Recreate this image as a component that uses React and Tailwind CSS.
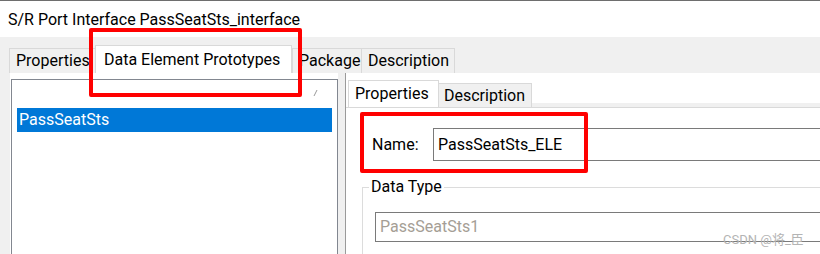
import React from "react"

const font = { fontFamily: "Roboto, 'Noto Sans CJK SC', sans-serif" }

function OuterTab({ label, active, width }) {
  return (
    <div
      className={
        active
          ? "shrink-0 h-[28px] bg-white border border-b-0 border-[#d9d9d9] pl-[8px] pt-[3px] text-[16px] leading-[22px] text-black whitespace-nowrap"
          : "shrink-0 h-[25px] bg-[#f0f0f0] border border-b-0 border-r-0 border-[#d9d9d9] pl-[6px] pt-[1px] text-[16px] leading-[22px] text-black whitespace-nowrap overflow-hidden"
      }
      style={{ width }}
    >
      {label}
    </div>
  )
}

export default function App() {
  return (
    <div className="relative w-[820px] h-[254px] overflow-hidden bg-[#f0f0f0] flex flex-col" style={font}>
      {/* window top edge */}
      <div className="shrink-0 h-px bg-[#6e6e6e]" />

      {/* title */}
      <div className="shrink-0 h-[36px] bg-white flex items-center pl-[8px] pt-[2px] text-[16px] text-black">
        S/R Port Interface PassSeatSts_interface
      </div>

      {/* outer tabs */}
      <div className="shrink-0 flex items-end pl-[9px] pt-[8px]">
        <OuterTab label="Properties" width={86} />
        <OuterTab label="Data Element Prototypes" width={197} active />
        <OuterTab label="Package" width={69} />
        <div className="shrink-0 h-[25px] w-[94px] bg-[#f0f0f0] border border-b-0 border-[#d9d9d9] pl-[6px] pt-[1px] text-[16px] leading-[22px] text-black">
          Description
        </div>
      </div>

      {/* tab page */}
      <div className="flex flex-1 min-h-0 ml-[10px]">
        {/* list pane */}
        <div className="w-[328px] bg-white pt-[6px] flex">
          <div className="flex-1 ml-px border border-b-0 border-[#828790] bg-white">
            <div className="h-[25px] flex justify-end items-center pr-[18px]">
              <svg width="6" height="8" viewBox="0 0 6 8">
                <line x1="1" y1="7" x2="4" y2="1" stroke="#9a9a9a" strokeWidth="1" />
              </svg>
            </div>
            <div className="mt-[3px] mx-[5px] h-[24px] bg-[#0078d7] text-white text-[16px] pl-[2px] flex items-center">
              PassSeatSts
            </div>
          </div>
        </div>

        {/* splitter */}
        <div className="w-[7px] bg-[#f0f0f0]" />

        {/* detail pane */}
        <div className="flex-1 bg-white border-l border-[#9a9a9a] flex flex-col">
          <div className="shrink-0 flex items-end pl-[2px] pt-[7px]">
            <div className="h-[27px] w-[91px] bg-white border border-b-0 border-[#d9d9d9] pl-[6px] pt-[2px] text-[16px] leading-[22px] text-black">
              Properties
            </div>
            <div className="h-[24px] w-[93px] bg-[#f0f0f0] border border-b-0 border-l-0 border-[#d9d9d9] pl-[5px] pt-[1px] text-[16px] leading-[22px] text-black">
              Description
            </div>
            <div className="flex-1 h-[4px] bg-[#f0f0f0]" />
          </div>

          <div className="shrink-0 border-t border-[#d9d9d9] bg-white pt-[20px]">
            <div className="flex items-center h-[33px]">
              <span className="w-[87px] pl-[26px] text-[16px] text-black">Name:</span>
              <div className="flex-1 h-[33px] border border-r-0 border-[#7a7a7a] flex items-center pl-[4px] text-[16px] text-black">
                PassSeatSts_ELE
              </div>
            </div>

            <div className="relative mt-[26px] ml-[16px] h-[80px] border-t border-l border-[#dcdcdc] pt-[24px] pl-[12px]">
              <span className="absolute -top-[12px] left-[6px] bg-white px-[2px] text-[16px] text-black leading-[22px]">
                Data Type
              </span>
              <div className="h-[30px] border border-r-0 border-[#7a7a7a] flex items-center pl-[4px] text-[16px] text-[#a59e95]">
                PassSeatSts1
              </div>
            </div>
          </div>
        </div>
      </div>

      {/* annotation boxes */}
      <div className="absolute left-[89px] top-[28px] w-[213px] h-[69px] border-[4px] border-[#ff0000] rounded-[2px]" />
      <div className="absolute left-[360px] top-[112px] w-[228px] h-[61px] border-[4px] border-[#ff0000] rounded-[2px]" />

      {/* watermark */}
      <div className="absolute left-[723px] top-[230px] text-[13px] text-[#b4b4b4]">CSDN @将_臣</div>
    </div>
  )
}
